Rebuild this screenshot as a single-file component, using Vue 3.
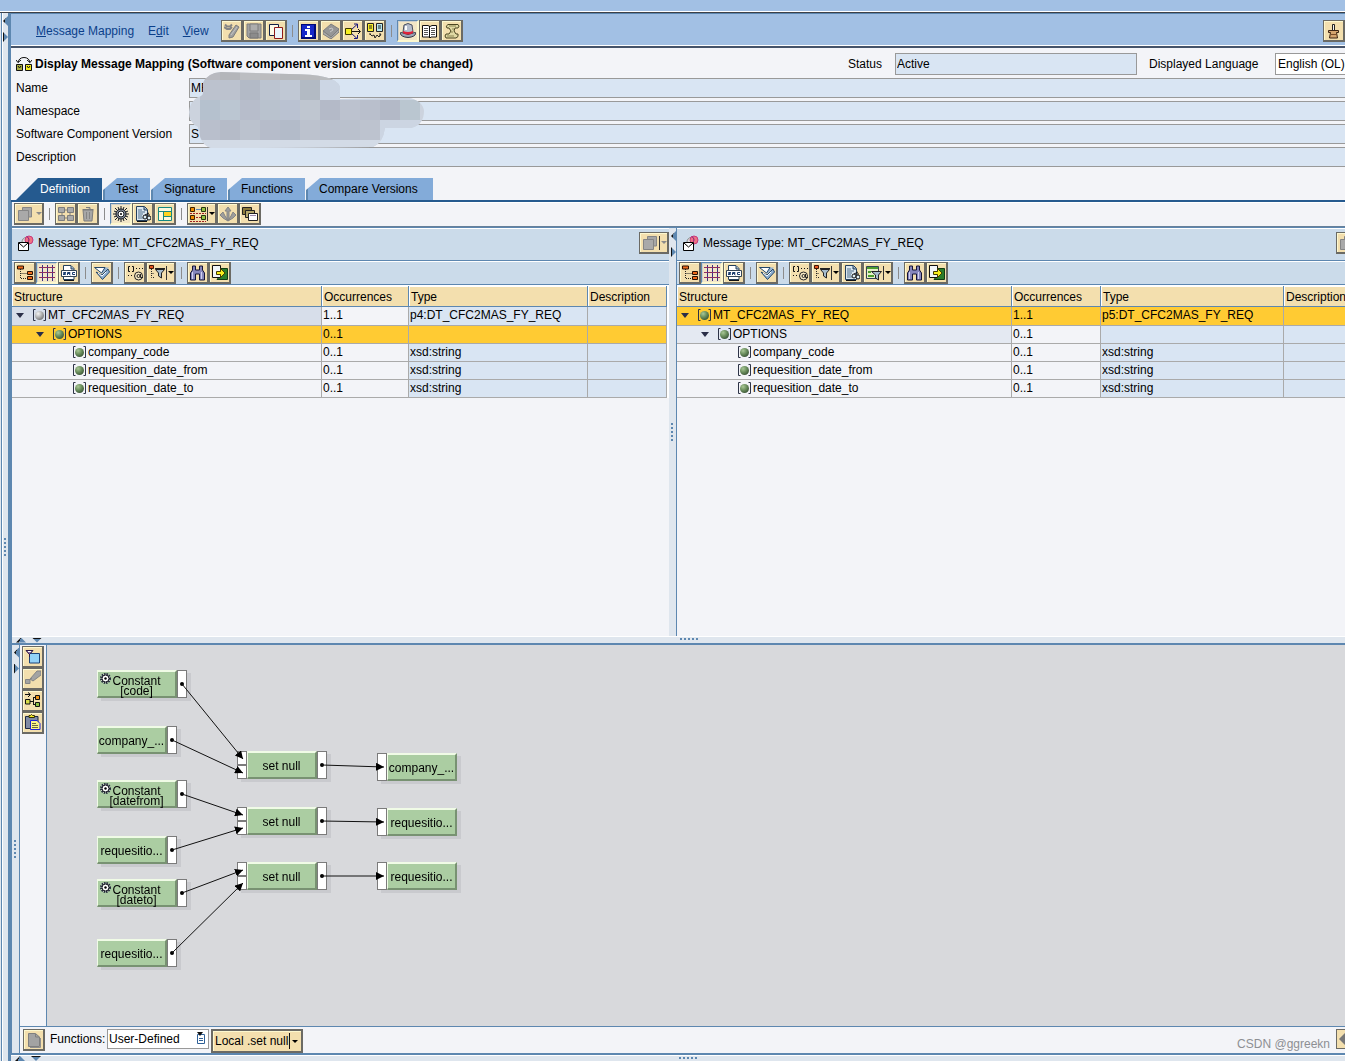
<script setup>
const menus = [
  { pre: '', key: 'M', post: 'essage Mapping' },
  { pre: 'E', key: 'd', post: 'it' },
  { pre: '', key: 'V', post: 'iew' },
]

const mainTools = [
  { icon: 'wand', label: 'Switch between display and edit' },
  { icon: 'save', label: 'Save' },
  { icon: 'copy', label: 'Copy object' },
  null,
  { icon: 'info', label: 'Information' },
  { icon: 'book', label: 'Documentation' },
  { icon: 'branch', label: 'Dependencies' },
  { icon: 'where', label: 'Where-used list' },
  null,
  { icon: 'hat', label: 'Properties', pressed: true },
  { icon: 'openbook', label: 'Display log' },
  { icon: 'scroll', label: 'History' },
]

const tabs = ['Definition', 'Test', 'Signature', 'Functions', 'Compare Versions']

const mappingTools = [
  { icon: 'windows', label: 'Open windows', drop: true, flat: true },
  null,
  { icon: 'tables', label: 'Map selected fields' },
  { icon: 'trash', label: 'Delete mapping' },
  null,
  { icon: 'gear', label: 'Show data flow', pressed: true },
  { icon: 'textview', label: 'Show text preview' },
  { icon: 'layout', label: 'Change layout' },
  null,
  { icon: 'links', label: 'Dependencies', drop: true },
  { icon: 'anchor', label: 'Templates' },
  { icon: 'stack', label: 'Parameters' },
]

const treeTools = [
  { icon: 'tree', label: 'Expand tree' },
  { icon: 'grid', label: 'Show columns', pressed: true },
  { icon: 'src', label: 'Source text' },
  null,
  { icon: 'expand', label: 'Expand all' },
  null,
  { icon: 'attrs', label: 'Attributes' },
  { icon: 'filter', label: 'Filter', drop: true },
]
const viewTools = [
  { icon: 'textview', label: 'Text preview' },
  { icon: 'mapfilter', label: 'Mapping filter', drop: true },
]
const findTools = [
  null,
  { icon: 'find', label: 'Find' },
  { icon: 'export', label: 'Export' },
]

const fieldRows = (prefix) => [
  { name: 'MT_CFC2MAS_FY_REQ', level: 0, open: true, occ: '1..1', type: prefix + ':DT_CFC2MAS_FY_REQ' },
  { name: 'OPTIONS', level: 1, open: true, occ: '0..1', type: '' },
  { name: 'company_code', level: 2, occ: '0..1', type: 'xsd:string' },
  { name: 'requesition_date_from', level: 2, occ: '0..1', type: 'xsd:string' },
  { name: 'requesition_date_to', level: 2, occ: '0..1', type: 'xsd:string' },
]

const panels = [
  { side: 'source', tools: [...treeTools, ...findTools], rows: fieldRows('p4'), selected: 1, shaded: 0, shade: 'deep', greyBall: 0 },
  { side: 'target', tools: [...treeTools, ...viewTools, ...findTools], rows: fieldRows('p5'), selected: 0, shaded: 1, shade: 'soft', greyBall: -1 },
]

const canvasTools = [
  { icon: 'newobj', label: 'New object' },
  { icon: 'eraser', label: 'Clean up' },
  { icon: 'arrange', label: 'Arrange objects' },
  { icon: 'paste', label: 'Paste' },
]

const nodes = [
  { x: 50, y: 25, w: 90, kind: 'constant', text: 'Constant', value: '[code]' },
  { x: 50, y: 81, w: 80, kind: 'field', text: 'company_...' },
  { x: 50, y: 135, w: 90, kind: 'constant', text: 'Constant', value: '[datefrom]' },
  { x: 50, y: 191, w: 80, kind: 'field', text: 'requesitio...' },
  { x: 50, y: 234, w: 90, kind: 'constant', text: 'Constant', value: '[dateto]' },
  { x: 50, y: 294, w: 80, kind: 'field', text: 'requesitio...' },
  { x: 190, y: 106, w: 90, kind: 'function', text: 'set null' },
  { x: 190, y: 162, w: 90, kind: 'function', text: 'set null' },
  { x: 190, y: 217, w: 90, kind: 'function', text: 'set null' },
  { x: 330, y: 108, w: 80, kind: 'target', text: 'company_...' },
  { x: 330, y: 163, w: 80, kind: 'target', text: 'requesitio...' },
  { x: 330, y: 217, w: 80, kind: 'target', text: 'requesitio...' },
]

const links = [
  [135, 39, 196, 114],
  [125, 95, 196, 128],
  [135, 149, 196, 170],
  [125, 205, 196, 183],
  [135, 248, 196, 225],
  [125, 308, 196, 238],
  [275, 120, 337, 122],
  [275, 176, 337, 177],
  [275, 231, 337, 231],
]

const mosaic = [
  ['#b9bac0', '#b4b6ba', '#bcbec2', '#bcbcbf', '#b6b8bb', '#b9babd', '#bbbdc0', '#c6cad2', '#c6cad2', '#c6cad2', '#c6cad2'],
  ['#bcc2ce', '#bcc2ce', '#b3bac6', '#bcc4d0', '#c0c8d4', '#b2bac4', '#ccd6e4', '#ccd6e4', '#ccd6e4', '#ccd6e4', '#ccd6e4'],
  ['#b5c1ce', '#bbc6d2', '#b7bdcb', '#b9c2ce', '#bac2d2', '#bfc6d0', '#b4bac8', '#bcc2cf', '#b9bfcc', '#b3b9c7', '#bac6d0'],
  ['#b9bfcc', '#b5bbc8', '#bbc2ce', '#b6bcca', '#b3bbc9', '#bcc2ce', '#b9c0cd', '#bac1cd', '#bdc3cf', '#ccd5e2', '#ccd5e2'],
]
</script>

<template>
  <svg class="defs" aria-hidden="true">
    <defs>
      <marker id="arrowhead" viewBox="0 0 8 8" refX="8" refY="4" markerWidth="8" markerHeight="8" markerUnits="userSpaceOnUse" orient="auto">
        <path d="M0 0L8 4L0 8Z" fill="#000" />
      </marker>
      <radialGradient id="green" cx="35%" cy="30%" r="75%">
        <stop offset="0" stop-color="#a9c796" /><stop offset="0.5" stop-color="#6d9160" /><stop offset="1" stop-color="#3c5637" />
      </radialGradient>
      <radialGradient id="grey" cx="35%" cy="30%" r="75%">
        <stop offset="0" stop-color="#f4f4f4" /><stop offset="0.5" stop-color="#b8b8b8" /><stop offset="1" stop-color="#747474" />
      </radialGradient>
    </defs>
    <symbol id="wand" viewBox="0 0 16 16">
      <path d="M1 1.500L3 3.500H6L8 1.500M0 4L3 6H6L8 4" stroke="#858585" stroke-width="2" fill="none" />
      <path d="M5 12L12 2L15 4L9 14L5 15Z" fill="#a0a0a0" stroke="#7d7d7d" /><path d="M7 12l6-8" stroke="#c4c4c4" />
    </symbol>
    <symbol id="save" viewBox="0 0 16 16">
      <path d="M1 1H15V15H3L1 13Z" fill="#a2a2a2" stroke="#7c7c7c" /><path d="M4 1H12V8H4Z" fill="#adadad" stroke="#7c7c7c" /><path d="M4 10H12V15H4Z" fill="#8b8b8b" stroke="#777" />
    </symbol>
    <symbol id="copy" viewBox="0 0 16 16">
      <path d="M1.500 1.500H10.500V12.500H1.500Z" fill="#fdfbe8" stroke="#102048" /><path d="M6.500 4.500H14.500V15.500H6.500Z" fill="#eaf5fb" stroke="#8f1a1a" /><path d="M8 6H13" stroke="#fff" />
    </symbol>
    <symbol id="info" viewBox="0 0 16 16">
      <rect x="0" y="1" width="15" height="15" fill="#000a78" /><rect x="1" y="2" width="12" height="12" fill="#1728c8" />
      <path d="M6 3H9V5H6ZM4 6H9V12H11V14H4V12H6V8H4Z" fill="#fff" />
    </symbol>
    <symbol id="book" viewBox="0 0 16 16">
      <path d="M0 8L8 1L16 6L8 14Z" fill="#969696" stroke="#7e7e7e" /><path d="M0 8V11L8 16L16 9V6L8 14Z" fill="#aaa" stroke="#7e7e7e" /><path d="M6 6L9 5L10 7L7 9" stroke="#c7c7c7" fill="none" />
    </symbol>
    <symbol id="branch" viewBox="0 0 16 16">
      <path d="M6 8.500H15M13 6L15.500 8.500L13 11" fill="none" stroke="#111" /><path d="M6 7L12 1.500M6 10L12 15.500M9 1H12.500V5M9 15.500H12.500V12" fill="none" stroke="#15157c" /><path d="M.5 5.500H6.500V11.500H.5Z" fill="#f6ef20" stroke="#3c3800" />
    </symbol>
    <symbol id="where" viewBox="0 0 16 16">
      <path d="M.5 .5H6.500V8.500H.5Z" fill="#f7ed2b" stroke="#222" /><path d="M9.500 .5H15.500V8.500H9.500Z" fill="#b7e7ee" stroke="#222" /><path d="M2 3H5M2 5H5M11 3H14M11 5H14" stroke="#222" />
      <path d="M3 11L5 13L7 12L8 15L10 12L12 14L14 11M3 10v2M13 10v3" fill="none" stroke="#222" />
    </symbol>
    <symbol id="hat" viewBox="0 0 16 16">
      <path d="M3 9L4 2Q8 -1 12 2L13 9" fill="#b5bdcc" stroke="#4b5060" /><path d="M6 3L6 7" stroke="#fff" stroke-width="2" />
      <path d="M0 10Q2 9 3 10Q8 13 13 10Q15 9 16 10Q15 14 8 14.500Q1 14 0 10Z" fill="#9aa3b5" stroke="#303543" /><path d="M3 8Q8 10 13 8V10Q8 13 3 10Z" fill="#e02038" />
    </symbol>
    <symbol id="openbook" viewBox="0 0 16 16">
      <path d="M.5 2.500H6L8 3.500L10 2.500H14.500V14H9L8 15L7 14H.5Z" fill="#fff" stroke="#111" /><path d="M7.500 3V15" stroke="#111" stroke-width="1" /><path d="M2 5.500H6M2 7.500H6M2 9.500H6M2 11.500H6M9 5.500H13M9 7.500H13M9 9.500H13M9 11.500H13" stroke="#555" />
    </symbol>
    <symbol id="scroll" viewBox="0 0 16 16">
      <path d="M4 1.500H14Q16 3 14 5H11L10 8L12 11H14Q15 14 12 15H2Q0 13 2 11H5L7 8L5 5H3Q1 3 4 1.500Z" fill="#e0daa4" stroke="#4a4420" /><path d="M5 3H12M8 6h2M7 9h2M3 13H10" stroke="#8e8654" />
    </symbol>
    <symbol id="brush" viewBox="0 0 16 16">
      <path d="M6.500 7V1.500H8.500V7" fill="#f2f2f2" stroke="#222" /><path d="M2.500 7.500H12.500V9.500H10.500L11.500 15H3.500L4.500 9.500H2.500Z" fill="#d5a46d" stroke="#3c2412" /><path d="M5 11.500H11" stroke="#7a4d28" />
    </symbol>
    <symbol id="windows" viewBox="0 0 16 16">
      <path d="M5.500 1.500H14.500V11H5.500Z" fill="#a6a6a6" stroke="#858585" /><path d="M1.500 4.500H11.500V14.500H1.500Z" fill="#a9a9a9" stroke="#858585" />
    </symbol>
    <symbol id="tables" viewBox="0 0 16 16">
      <path d="M.5 1.500H6.500V6.500H.5ZM9.500 1.500H15.500V6.500H9.500ZM.5 9.500H6.500V14.500H.5ZM9.500 9.500H15.500V14.500H9.500ZM6 4H10M6 12H10M4 6V10M12 6V10" fill="#aaa" stroke="#7d7d7d" />
    </symbol>
    <symbol id="trash" viewBox="0 0 16 16">
      <path d="M3 4L4 15H12L13 4ZM2.500 3.500H13.500M6 1.500H10V3" fill="#a6a6a6" stroke="#7d7d7d" /><path d="M6.500 6V13M9.500 6V13" stroke="#858585" />
    </symbol>
    <symbol id="gear" viewBox="0 0 16 16">
      <path d="M8 0V16M0 8H16M2 2L14 14M2 14L14 2M5 1L11 15M1 5L15 11M11 1L5 15M1 11L15 5" stroke="#161a22" /><circle cx="8" cy="8" r="5" fill="#89919f" stroke="#161a22" /><circle cx="8" cy="8" r="3" fill="#fff" stroke="#161a22" /><path d="M8 7v2M7 8h2" stroke="#000" />
    </symbol>
    <symbol id="cog" viewBox="0 0 11 11">
      <circle cx="5.500" cy="5.500" r="4.500" fill="#fff" stroke="#222a3a" stroke-width="2" stroke-dasharray="1.500 .9" /><circle cx="5.500" cy="5.500" r="3.500" fill="#fff" stroke="#0a0c14" /><circle cx="5.500" cy="5.500" r="1.200" fill="#000" />
    </symbol>
    <symbol id="textview" viewBox="0 0 16 16">
      <path d="M1.500 .5H9.500L12.500 3.500V14.500H1.500Z" fill="#dce8f0" stroke="#24405c" /><path d="M9 1V4H12" fill="#8fa6bb" stroke="#24405c" /><path d="M3 4H7M3 6H10M3 8H8M3 10H7M3 12H8" stroke="#50708c" />
      <circle cx="10" cy="11" r="2" fill="#dff1f8" stroke="#111" /><circle cx="14" cy="12" r="2" fill="#dff1f8" stroke="#111" /><path d="M10 9l4-2M14 10v-2" stroke="#111" /><path d="M2 15.500H12" stroke="#111" />
    </symbol>
    <symbol id="layout" viewBox="0 0 16 16">
      <path d="M1.500 1.500H14.500V14.500H1.500Z" fill="#fdf8dc" stroke="#158880" /><path d="M6.500 5.500H14.500V10.500H6.500Z" fill="#ffd21f" stroke="#158880" /><path d="M1 5.500H15M6.500 5V15" stroke="#158880" />
    </symbol>
    <symbol id="links" viewBox="0 0 16 16">
      <path d="M.5 1.500H4.500V5.500H.5ZM.5 9.500H4.500V13.500H.5Z" fill="#ef8a00" stroke="#3b2100" /><path d="M11.500 1.500H15.500V5.500H11.500ZM11.500 9.500H15.500V13.500H11.500Z" fill="#96c443" stroke="#24370d" />
      <path d="M6 3.500H11" stroke="#5a86b6" /><path d="M6 11.500H11M0 7.500H16M0 15.500H16" stroke="#a02020" stroke-dasharray="2 1" />
    </symbol>
    <symbol id="anchor" viewBox="0 0 16 16">
      <path d="M8 1L11 5H9V14H7V5H5ZM0 9L3 6L5 10L7 13L8 15L3 12ZM16 9L13 6L11 10L9 13L8 15L13 12Z" fill="#9d9d9d" stroke="#858585" />
    </symbol>
    <symbol id="stack" viewBox="0 0 16 16">
      <path d="M.5 1.500H9.500V8.500H.5Z" fill="#8b7a3b" stroke="#222" /><path d="M3.500 4.500H12.500V11.500H3.500Z" fill="#b4a86a" stroke="#222" /><path d="M6.500 7.500H15.500V14.500H6.500Z" fill="#fff" stroke="#222" /><path d="M8 9.500H14" stroke="#98a" />
    </symbol>
    <symbol id="message" viewBox="0 0 16 16">
      <path d="M4 7Q4 3 9 2L10 8" fill="#ddd" stroke="#888" /><circle cx="11" cy="5" r="4" fill="#ee7382" stroke="#c7397d" /><path d="M9 1.500Q13 5 9 8" fill="none" stroke="#7b1480" />
      <path d="M.5 7.500H10.500V15.500H.5Z" fill="#fff" stroke="#000" /><path d="M1 8L5.500 12L10 8" fill="none" stroke="#000" />
    </symbol>
    <symbol id="tree" viewBox="0 0 16 16">
      <path d="M3.500 4V13.500H10M3.500 8.500H10" fill="none" stroke="#222" stroke-dasharray="1 1" /><path d="M.5 1H6.500V4H.5ZM10.500 6.500H15.500V9.500H10.500ZM10.500 11.500H15.500V14.500H10.500Z" fill="#ee6a1c" stroke="#291003" />
    </symbol>
    <symbol id="grid" viewBox="0 0 16 16">
      <path d="M3.500 0V16M8.500 0V16M13.500 0V16" stroke="#3b2b85" /><path d="M0 2.500H16M0 7.500H16M0 12.500H16" stroke="#8f2f62" />
    </symbol>
    <symbol id="src" viewBox="0 0 16 16">
      <path d="M2.500 .5H10L13 3.500V14.500H2.500Z" fill="#fff" stroke="#24405c" /><path d="M10 1V4H13" fill="#aac0d4" stroke="#24405c" /><path d="M.5 5.500H15.500V11.500H.5Z" fill="#fff" stroke="#345" />
      <path d="M5 7.500H2.500V8.500H4.500V9.500H2M6.500 10V7.500H9V8.500H7M8 9L9.500 10M14 7.500H11.500V9.500H14" fill="none" stroke="#1d3f70" /><path d="M3 15.500H13" stroke="#111" />
    </symbol>
    <symbol id="expand" viewBox="0 0 16 16">
      <path d="M5 2.500H15L8 9Z" fill="#8fb0d0" stroke="none" /><path d="M.5 2.500H11L7.500 8Z" fill="#fff" stroke="#24476b" /><path d="M2 7L8 10L14 4L15.500 7L8.500 14.500Z" fill="#8fb0d0" stroke="#24476b" /><path d="M4 8L8 11L12 7" fill="none" stroke="#fff" />
    </symbol>
    <symbol id="attrs" viewBox="0 0 16 16">
      <path d="M3 1.500H1.500V6.500H3M5 1.500H6.500V6.500H5M9 3.500H10M12 3.500H13M15 3.500H16M1 10.500H2M4 10.500H5" fill="none" stroke="#111" />
      <circle cx="11.500" cy="11" r="4" fill="#f6e8c4" stroke="#222" /><circle cx="11.500" cy="11" r="1.500" fill="none" stroke="#222" /><path d="M13.500 9V12.500H16" fill="none" stroke="#222" />
    </symbol>
    <symbol id="filter" viewBox="0 0 16 16">
      <path d="M2.500 4V12.500H6M2.500 8.500H5" fill="none" stroke="#222" stroke-dasharray="1 1" /><path d="M.5 .5H4.500V3.500H.5Z" fill="#e45420" stroke="#401505" /><path d="M6.500 4.500H15.500L12.500 8V13L9.500 11V8Z" fill="#a6bccd" stroke="#222" /><path d="M6 3.500H16" stroke="#222" />
    </symbol>
    <symbol id="mapfilter" viewBox="0 0 16 16">
      <path d="M.5 1.500H12.500V13.500H.5Z" fill="#e6f0c8" stroke="#345" /><path d="M1 3H12" stroke="#4c9e2e" stroke-width="2" /><path d="M2 7H5M2 11H8" stroke="#4c9e2e" stroke-width="2" /><path d="M5.500 6.500H15.500L12.500 10V15L9.500 13V10Z" fill="#a6bccd" stroke="#222" />
    </symbol>
    <symbol id="find" viewBox="0 0 16 16">
      <path d="M2.500 1H5.500V5H9.500V1H12.500V5L14.500 8V15H9.500V9H5.500V15H.5V8L2.500 5Z" fill="#8686bc" stroke="#141436" /><path d="M2.500 7V14M11.500 7V14" stroke="#d2d2f2" />
    </symbol>
    <symbol id="export" viewBox="0 0 16 16">
      <path d="M7 3.500H15.500V14.500H5L7 12Z" fill="#2b7d2b" stroke="#123b12" /><path d="M.5 .5H8.500V12.500H.5Z" fill="#f1f6fa" stroke="#111" /><path d="M4.500 6.500H8.500V3.500L13 8L8.500 12.500V9.500H4.500Z" fill="#f8ee1e" stroke="#443c00" />
    </symbol>
    <symbol id="newobj" viewBox="0 0 16 16">
      <path d="M4.500 5.500H14.500V15H4.500Z" fill="#93d2f8" stroke="#1b4378" /><path d="M1 2.500H8L4.500 6.500Z" fill="#8d6ca2" stroke="#301c48" /><path d="M4.500 6V9" stroke="#301c48" /><path d="M3 3.500H6" stroke="#fff" />
    </symbol>
    <symbol id="eraser" viewBox="0 0 16 16">
      <path d="M5 9L12 1H16V5L8 11Z" fill="#a3a3a3" stroke="#858585" /><path d="M.5 9.500H5V13.500H.5ZM4 10L7 8" fill="#a3a3a3" stroke="#858585" />
    </symbol>
    <symbol id="arrange" viewBox="0 0 16 16">
      <path d="M0 2.500H5M3 .5L5.500 2.500L3 5" fill="none" stroke="#111" /><path d="M8.500 5V13M5 9.500H8M8 5.500H11M8 12.500H11" fill="none" stroke="#111" /><path d="M.5 7.500H5V12H.5Z" fill="#d6dc48" stroke="#111" /><path d="M10.500 3.500H14.500V7.500H10.500Z" fill="#ef9416" stroke="#111" /><path d="M10.500 10.500H14.500V14.500H10.500Z" fill="#8bbf43" stroke="#111" />
    </symbol>
    <symbol id="paste" viewBox="0 0 16 16">
      <path d="M.5 2.500H13V14.500H.5Z" fill="#7f8aa4" stroke="#1b2744" /><path d="M4 3.500V1.500H5.500L6.500 .5L7.500 1.500H9.500V3.500Z" fill="#f2ea24" stroke="#333000" /><path d="M5.500 6.500H12L15 9.500V15.500H5.500Z" fill="#fbf586" stroke="#1c22d4" /><path d="M7 9.500H11M7 11.500H13M7 13.500H13" stroke="#6a6a40" />
    </symbol>
    <symbol id="page" viewBox="0 0 16 16">
      <path d="M2.500 1.500H9.500L13.500 5V14.500H2.500Z" fill="#a3a3a3" stroke="#7f7f7f" /><path d="M9.500 2V5H13.500" fill="none" stroke="#7f7f7f" /><path d="M4 15.500H14.500V6" fill="none" stroke="#8f8f8f" />
    </symbol>
    <symbol id="mapping" viewBox="0 0 16 16">
      <path d="M2 6.500Q3 1.500 8 1.500Q13 1.500 14 6.500M0 4L2 6.500L5 4M11 4L14 6.500L16 4" fill="none" stroke="#111" /><path d="M.5 8.500H6.500V14.500H.5Z" fill="#a9ad43" stroke="#111" /><path d="M9.500 8.500H15.500V14.500H9.500Z" fill="#f6ec22" stroke="#111" /><path d="M2 10L3.500 12L5 10M11 10L12.500 12L14 10" fill="none" stroke="#111" />
    </symbol>
  </svg>

  <div class="app">
    <div class="topstrip"></div>
    <div class="frame">
      <div class="outer-split">
        <span class="vert-arrows"><i class="left"></i><i class="right"></i></span>
        <span class="dots tall"></span>
      </div>

      <main class="main">
        <header class="menubar">
          <nav class="menus">
            <a v-for="m in menus" :key="m.post" href="#">{{ m.pre }}<u>{{ m.key }}</u>{{ m.post }}</a>
          </nav>
          <div class="tools">
            <template v-for="(t, i) in mainTools" :key="i">
              <button v-if="t" class="tool" :class="{ pressed: t.pressed }" :aria-label="t.label"><svg class="icon"><use :href="'#' + t.icon" /></svg></button>
              <span v-else class="sep"></span>
            </template>
          </div>
          <button class="tool end" aria-label="Pin"><svg class="icon"><use href="#brush" /></svg></button>
        </header>

        <section class="object">
          <div class="title-row">
            <svg class="icon"><use href="#mapping" /></svg>
            <h1>Display Message Mapping (Software component version cannot be changed)</h1>
            <label class="status-label" for="status">Status</label>
            <input id="status" class="status" value="Active" readonly />
            <label class="lang-label" for="lang">Displayed Language</label>
            <select id="lang" class="lang"><option>English (OL)</option></select>
          </div>
          <div class="props">
            <label for="name">Name</label><input id="name" value="MF" readonly />
            <label for="ns">Namespace</label><input id="ns" readonly />
            <label for="scv">Software Component Version</label><input id="scv" value="S" readonly />
            <label for="desc">Description</label><input id="desc" readonly />
            <svg class="mask" viewBox="0 0 236 78" aria-hidden="true">
              <clipPath id="blob"><path d="M14 22V12Q18 2 32 1L100 3Q148 3 151 16V28L220 27Q234 30 235 40Q235 54 222 57H196Q194 72 184 76L60 77L22 77Q11 74 9 56Q0 52 0 41Q1 30 9 26Q14 25 14 22Z" /></clipPath>
              <g clip-path="url(#blob)">
                <rect width="236" height="78" fill="#ccd3de" />
                <template v-for="(row, r) in mosaic" :key="r">
                  <rect v-for="(c, i) in row" :key="i" :x="11 + i * 20" :y="r * 20 - 11" width="20" height="20" :fill="c" />
                </template>
                <rect x="0" y="69" width="236" height="9" fill="#d3dbe6" />
              </g>
            </svg>
          </div>
        </section>

        <div class="tabs" role="tablist">
          <button v-for="(t, i) in tabs" :key="t" role="tab" class="tab" :class="{ active: i === 0 }" :aria-selected="i === 0">{{ t }}</button>
        </div>

        <div class="work">
          <div class="tools mapping-tools">
            <template v-for="(t, i) in mappingTools" :key="i">
              <button v-if="t" class="tool" :class="{ pressed: t.pressed, drop: t.drop, disabled: t.flat }" :aria-label="t.label">
                <svg class="icon"><use :href="'#' + t.icon" /></svg><span v-if="t.drop" class="caret"></span>
              </button>
              <span v-else class="sep"></span>
            </template>
          </div>

          <div class="panes">
            <template v-for="(p, pi) in panels" :key="p.side">
              <div v-if="pi" class="pane-split">
                <span class="vert-arrows"><i class="left"></i><i class="right"></i></span>
                <span class="dots tall"></span>
              </div>
              <section class="pane" :class="p.side">
                <div class="pane-title">
                  <svg class="icon"><use href="#message" /></svg>
                  <h2>Message Type: MT_CFC2MAS_FY_REQ</h2>
                  <button class="tool drop disabled bar" aria-label="Open windows"><svg class="icon"><use href="#windows" /></svg><span class="caret"></span></button>
                </div>
                <div class="tools pane-tools">
                  <template v-for="(t, i) in p.tools" :key="i">
                    <button v-if="t" class="tool" :class="{ pressed: t.pressed, drop: t.drop }" :aria-label="t.label">
                      <svg class="icon"><use :href="'#' + t.icon" /></svg><span v-if="t.drop" class="caret"></span>
                    </button>
                    <span v-else class="sep"></span>
                  </template>
                </div>
                <div class="table-wrap">
                  <table>
                    <colgroup><col class="c-struct" /><col class="c-occ" /><col class="c-type" /><col /></colgroup>
                    <thead><tr><th>Structure</th><th>Occurrences</th><th>Type</th><th>Description</th></tr></thead>
                    <tbody>
                      <tr v-for="(r, ri) in p.rows" :key="r.name" :class="[{ selected: ri === p.selected }, ri === p.shaded ? p.shade : '']">
                        <td>
                          <div class="tree" :class="'level' + r.level">
                            <span class="twisty" :class="{ open: r.open }"></span>
                            <svg class="ball" viewBox="0 0 15 14">
                              <path d="M3.500 1.500H1.500V12.500H3.500M11.500 1.500H13.500V12.500H11.500" fill="none" stroke="#2d3347" />
                              <circle cx="7.500" cy="7.500" r="4.500" :fill="ri === p.greyBall ? 'url(#grey)' : 'url(#green)'" />
                            </svg>
                            <span>{{ r.name }}</span>
                          </div>
                        </td>
                        <td>{{ r.occ }}</td><td>{{ r.type }}</td><td></td>
                      </tr>
                    </tbody>
                  </table>
                </div>
              </section>
            </template>
          </div>

          <div class="row-split">
            <span class="horiz-arrows"><i class="up"></i><i class="down"></i></span>
            <span class="dots wide"></span>
          </div>

          <div class="flow">
            <div class="flow-split">
              <span class="vert-arrows"><i class="left"></i><i class="right"></i></span>
              <span class="dots tall"></span>
            </div>
            <div class="flow-body">
              <div class="flow-top">
                <div class="side-tools">
                  <button v-for="t in canvasTools" :key="t.icon" class="tool" :aria-label="t.label"><svg class="icon"><use :href="'#' + t.icon" /></svg></button>
                </div>
                <div class="canvas">
                  <div v-for="(n, i) in nodes" :key="i" class="node" :class="n.kind" :style="{ left: n.x + 'px', top: n.y + 'px', width: n.w + 'px' }">
                    <span v-if="n.kind === 'function'" class="ports"><i></i><i></i></span>
                    <span v-if="n.kind === 'target'" class="ports"><i></i></span>
                    <span class="body">
                      <svg v-if="n.kind === 'constant'" class="cog"><use href="#cog" /></svg>
                      <span>{{ n.text }}</span><span v-if="n.value">{{ n.value }}</span>
                    </span>
                    <span v-if="n.kind !== 'target'" class="ports out"><i></i></span>
                  </div>
                  <svg class="links" aria-hidden="true">
                    <g v-for="(l, i) in links" :key="i">
                      <circle :cx="l[0]" :cy="l[1]" r="2" />
                      <line :x1="l[0]" :y1="l[1]" :x2="l[2]" :y2="l[3]" stroke="#111" marker-end="url(#arrowhead)" />
                    </g>
                  </svg>
                </div>
              </div>
              <footer class="functions">
                <button class="tool" aria-label="New function"><svg class="icon"><use href="#page" /></svg></button>
                <label for="fn">Functions:</label>
                <span class="fn-select">
                  <select id="fn"><option>User-Defined</option></select>
                  <svg viewBox="0 0 10 12" aria-hidden="true"><path d="M1.500 2.500H8.500V11.500H1.500Z" fill="#fff" stroke="#2e6097" /><path d="M3 6.500H7M3 8.500H7" stroke="#2e6097" /><path d="M1 0H7L4 4Z" fill="#111" /></svg>
                </span>
                <button class="local">Local .set null<span class="caret"></span></button>
                <span class="mark">CSDN @ggreekn</span>
                <button class="scroll" aria-label="Scroll left"><svg viewBox="0 0 8 18"><path d="M8 3V15L2 9Z" fill="#777" /></svg></button>
              </footer>
            </div>
          </div>
        </div>

        <div class="bottom-split">
          <span class="horiz-arrows"><i class="up"></i><i class="down"></i></span>
          <span class="dots wide"></span>
        </div>
      </main>
    </div>
  </div>
</template>

<style>
body { background: #f3f4f8; overflow: hidden; }
</style>

<style scoped>
.app, .app * { box-sizing: border-box; }
.app {
  display: flex; flex-direction: column; height: 100vh; overflow: hidden;
  font: 12px/16px "Liberation Sans", Arial, sans-serif; color: #000;
}
.defs { position: absolute; width: 0; height: 0; }
button, input, select { font: inherit; color: inherit; margin: 0; border-radius: 0; }
h1, h2 { margin: 0; font-size: 12px; line-height: 16px; }
h2 { font-weight: normal; }

.topstrip { flex: none; height: 13px; background: #a2c0e4; border-bottom: 1px solid #3c4048; box-shadow: inset 0 -1px #fff; }
.frame { flex: 1; display: flex; min-height: 0; }
.main { flex: 1; min-width: 0; display: flex; flex-direction: column; border-left: 3px solid #5d87b0; background: #f3f4f8; }

/* splitters */
.outer-split, .pane-split, .flow-split { position: relative; flex: none; display: flex; flex-direction: column; justify-content: center; align-items: center; background: #dfe6ee; }
.outer-split { width: 8px; padding: 20px 0 0 2px; box-shadow: inset 1px 0 #dfe6ee, inset 2px 0 #5d87b0, inset 3px 0 #fff; }
.pane-split { width: 8px; border-right: 1px solid #5d87b0; }
.flow-split { width: 8px; border-right: 1px solid #5d87b0; }
.vert-arrows { position: absolute; top: 3px; right: 0; display: flex; flex-direction: column; gap: 6px; }
.vert-arrows i, .horiz-arrows i { background: #5d87b0; display: block; }
.vert-arrows i { width: 5px; height: 10px; }
.vert-arrows .left { clip-path: polygon(100% 0, 100% 100%, 0 50%); background: linear-gradient(100deg, #111 45%, #5d87b0 46%); }
.vert-arrows .right { clip-path: polygon(0 0, 100% 50%, 0 100%); background: linear-gradient(90deg, #111 20%, #5d87b0 21%); }
.horiz-arrows { position: absolute; left: 4px; top: 1px; display: flex; gap: 6px; }
.horiz-arrows i { width: 10px; height: 5px; }
.horiz-arrows .up { clip-path: polygon(50% 0, 100% 100%, 0 100%); background: linear-gradient(120deg, #111 40%, #5d87b0 41%); }
.horiz-arrows .down { clip-path: polygon(0 0, 100% 0, 50% 100%); background: linear-gradient(180deg, #111 20%, #5d87b0 21%); }
.dots.tall { width: 3px; height: 18px; background: repeating-linear-gradient(#5d87b0 0 2px, transparent 2px 4px) 0 0 / 2px 100% no-repeat; }
.dots.wide { width: 18px; height: 3px; background: repeating-linear-gradient(90deg, #5d87b0 0 2px, transparent 2px 4px) 0 0 / 100% 2px no-repeat; }
.row-split, .bottom-split { position: relative; flex: none; display: flex; justify-content: center; align-items: center; padding-left: 20px; background: #dfe6ee; }
.row-split { height: 9px; border-top: 1px solid #fff; border-bottom: 2px solid #5d87b0; }
.bottom-split { height: 8px; border-top: 2px solid #5d87b0; box-shadow: inset 0 1px #fff; }

/* tool buttons */
.tools { display: flex; align-items: center; }
.tool {
  flex: none; display: flex; align-items: center; width: 22px; height: 22px; padding: 0 0 0 2px;
  background: #f3dfae; border: 1px solid #6b6a64; border-right-width: 2px; border-bottom-width: 2px;
  box-shadow: inset 1px 1px #fdf8cf;
}
.tool.pressed { background: #f2e6c6; border-color: #5d87b0 #fdf8cf #fdf8cf #5d87b0; box-shadow: inset 1px 1px #cfd0cc; }
.tool.drop { width: 30px; }
.tool.drop .caret { margin-left: 1px; border-left: 1px solid #333; height: 14px; padding-left: 1px; }
.icon { flex: none; display: block; width: 16px; height: 16px; }
.caret { display: flex; align-items: center; }
.caret::after { content: ""; border: 3px solid transparent; border-top-color: #000; border-bottom: 0; }
.disabled .caret::after { border-top-color: #8b8b8b; }
.disabled:not(.bar) .caret { border-left-color: transparent; }
.sep { flex: none; width: 1px; height: 12px; margin: 0 5px; background: #8c8c8c; }

.menubar { flex: none; display: flex; align-items: center; height: 35px; background: #a2c0e4; border-top: 1px solid #5d87b0; border-bottom: 2px solid #45536a; box-shadow: inset 0 -1px #fff; padding: 2px 0 0 25px; }
.menus { display: flex; width: 185px; gap: 14px; }
.menus a { color: #0b3f8a; text-decoration: none; }
.tool.end { margin-left: auto; }

.object { flex: none; padding: 5px 0 0 5px; }
.title-row { display: flex; align-items: center; height: 22px; margin-bottom: 3px; }
.title-row h1 { margin: 0 auto 0 3px; white-space: nowrap; }
.object input, .object select { height: 20px; padding: 0 1px; border: 1px solid #999; background: #d9e5f3; outline: 0; min-width: 0; }
.title-row label { flex: none; }
.status-label { width: 47px; }
.title-row .status { flex: none; width: 242px; height: 22px; margin-right: 12px; }
.lang-label { width: 126px; }
.title-row .lang { flex: none; width: 70px; height: 22px; background: #fff; border-right: 0; padding: 0 0 0 2px; appearance: none; text-overflow: clip; }
.props { position: relative; display: grid; grid-template-columns: 173px 1fr; row-gap: 3px; align-items: center; }
.props input { border-right: 0; }
.mask { position: absolute; left: 173px; top: -7px; width: 236px; height: 78px; }

.tabs { flex: none; display: flex; gap: 1px; margin-top: 11px; padding-left: 5px; border-bottom: 2px solid #255a8f; }
.tab { height: 22px; padding: 0 0 0 13px; border: 0; text-align: left; clip-path: polygon(14px 0, 100% 0, 100% 100%, 0 100%, 0 12px); white-space: nowrap; }
.tab:nth-child(1) { width: 86px; } .tab:nth-child(2) { width: 47px; }
.tab:nth-child(3) { width: 76px; } .tab:nth-child(4) { width: 77px; } .tab:nth-child(5) { width: 127px; }
.tab.active { background: #255a8f; color: #fff; padding-left: 24px; clip-path: polygon(22px 0, 100% 0, 100% 100%, 0 100%); }
.tab:not(.active) { background: linear-gradient(90deg, #5d87b0 2px, #83abd9 2px); }

.work { flex: 1; min-height: 0; display: flex; flex-direction: column; border-left: 1px solid #5d87b0; }
.mapping-tools { flex: none; height: 25px; padding: 1px 0 1px 2px; border-bottom: 1px solid #66809a; box-shadow: inset 0 1px #fff; }
.panes { flex: 408 1 0; min-height: 0; display: flex; border-top: 1px solid #5d87b0; }
.pane { min-width: 0; display: flex; flex-direction: column; overflow: hidden; }
.pane.source { flex: 657 1 0; }
.pane.target { flex: 668 1 0; }
.pane-title { flex: none; display: flex; align-items: center; height: 33px; padding: 0 0 2px 6px; background: #cbdbea; border-bottom: 1px solid #5d87b0; box-shadow: inset 0 1px #fff; }
.pane-title h2 { margin: 0 auto 0 4px; }
.pane.target .bar { margin-right: -21px; }
.pane-tools { flex: none; height: 24px; padding: 1px 0 0 2px; background: #cbdbea; border-bottom: 1px solid #5d87b0; box-shadow: inset 0 1px #fff; }
.source .table-wrap { padding-right: 2px; }
.table-wrap { padding-top: 1px; background: #fff; }
table { width: 100%; table-layout: fixed; border-collapse: separate; border-spacing: 0; background: #f3f4f8; }
.source .c-struct { width: 310px; } .source .c-occ { width: 87px; } .source .c-type { width: 179px; }
.target .c-struct { width: 335px; } .target .c-occ { width: 89px; } .target .c-type { width: 183px; }
th { height: 21px; padding: 2px 2px 0; text-align: left; font-weight: normal; background: #f3dfae; border-right: 1px solid #5d87b0; border-bottom: 1px solid #5d87b0; box-shadow: inset 1px 1px #fff; overflow: hidden; white-space: nowrap; }
td { height: 18px; padding: 1px 1px 0; line-height: 14px; vertical-align: top; border-right: 1px solid #aaa; border-bottom: 1px solid #aaa; background: #f3f4f8; white-space: nowrap; }
tbody tr:first-child td { height: 19px; }
.target th:last-child, .target td:last-child { border-right: 0; }
td:nth-child(n+3) { background: #d9e5f3; }
.deep td:first-child { background: #d7deea; }
.soft td:first-child { background: #e4e9f2; }
.selected td { background: #ffcb33; }
.tree { display: flex; align-items: center; }
.level1 { padding-left: 20px; } .level2 { padding-left: 40px; }
.twisty { width: 15px; margin-left: 3px; margin-right: 1px; }
.twisty.open::before { content: ""; display: block; width: 0; border: 4px solid transparent; border-top: 5px solid #2a2e48; border-bottom: 0; }
.ball { flex: none; width: 15px; height: 14px; margin-right: 1px; }

.flow { flex: 409 1 0; min-height: 0; display: flex; }
.flow-body { flex: 1; min-width: 0; display: flex; flex-direction: column; }
.flow-top { flex: 1; min-height: 0; display: flex; }
.side-tools { flex: none; width: 27px; padding: 1px 0 0 2px; border-right: 1px solid #5d87b0; }
.canvas { position: relative; flex: 1; background: #d8d9dc; overflow: hidden; }
.links { position: absolute; inset: 0; width: 100%; height: 100%; }
.node { position: absolute; display: flex; height: 28px; filter: drop-shadow(4px 3px 0 #c9cace); }
.body { flex: 1; position: relative; display: flex; flex-direction: column; align-items: center; justify-content: center; min-width: 0; line-height: 10px; background: #abcda2; border: 2px solid #789272; border-top-color: #f0fbe6; border-left: 1px solid #f0fbe6; white-space: nowrap; padding-top: 2px; }
.constant .body { justify-content: flex-end; padding: 0; }
.cog { position: absolute; left: 2px; top: 1px; width: 11px; height: 11px; }
.ports { flex: none; width: 10px; display: flex; flex-direction: column; }
.ports i { flex: 1; background: #fff; border: 1px solid #7b7b7b; }

.functions { flex: none; display: flex; align-items: flex-start; height: 27px; padding: 2px 0 0 3px; border-top: 1px solid #5d87b0; }
.functions label { margin-left: 5px; width: 57px; line-height: 20px; }
.fn-select { position: relative; width: 102px; height: 20px; }
.fn-select select { display: block; width: 100%; height: 20px; padding: 0 1px; background: #fff; border: 1px solid #999; appearance: none; }
.fn-select svg { position: absolute; right: 3px; top: 3px; width: 10px; height: 12px; pointer-events: none; }
.local { display: flex; align-items: center; width: 92px; height: 24px; margin-left: 2px; padding: 0 0 0 2px; background: #f3dfae; border: 2px solid #6b6a64; box-shadow: inset 1px 1px #fdf8cf; white-space: nowrap; }
.local .caret { height: 16px; margin-left: 1px; padding-left: 2px; border-left: 1px solid #111; }
.mark { margin: 7px 6px 0 auto; color: #8d8f93; }
.scroll { width: 9px; height: 20px; padding: 0; background: #f3dfae; border: 1px solid #6b6a64; border-right: 0; overflow: hidden; }
.scroll svg { display: block; width: 8px; height: 18px; }
</style>
